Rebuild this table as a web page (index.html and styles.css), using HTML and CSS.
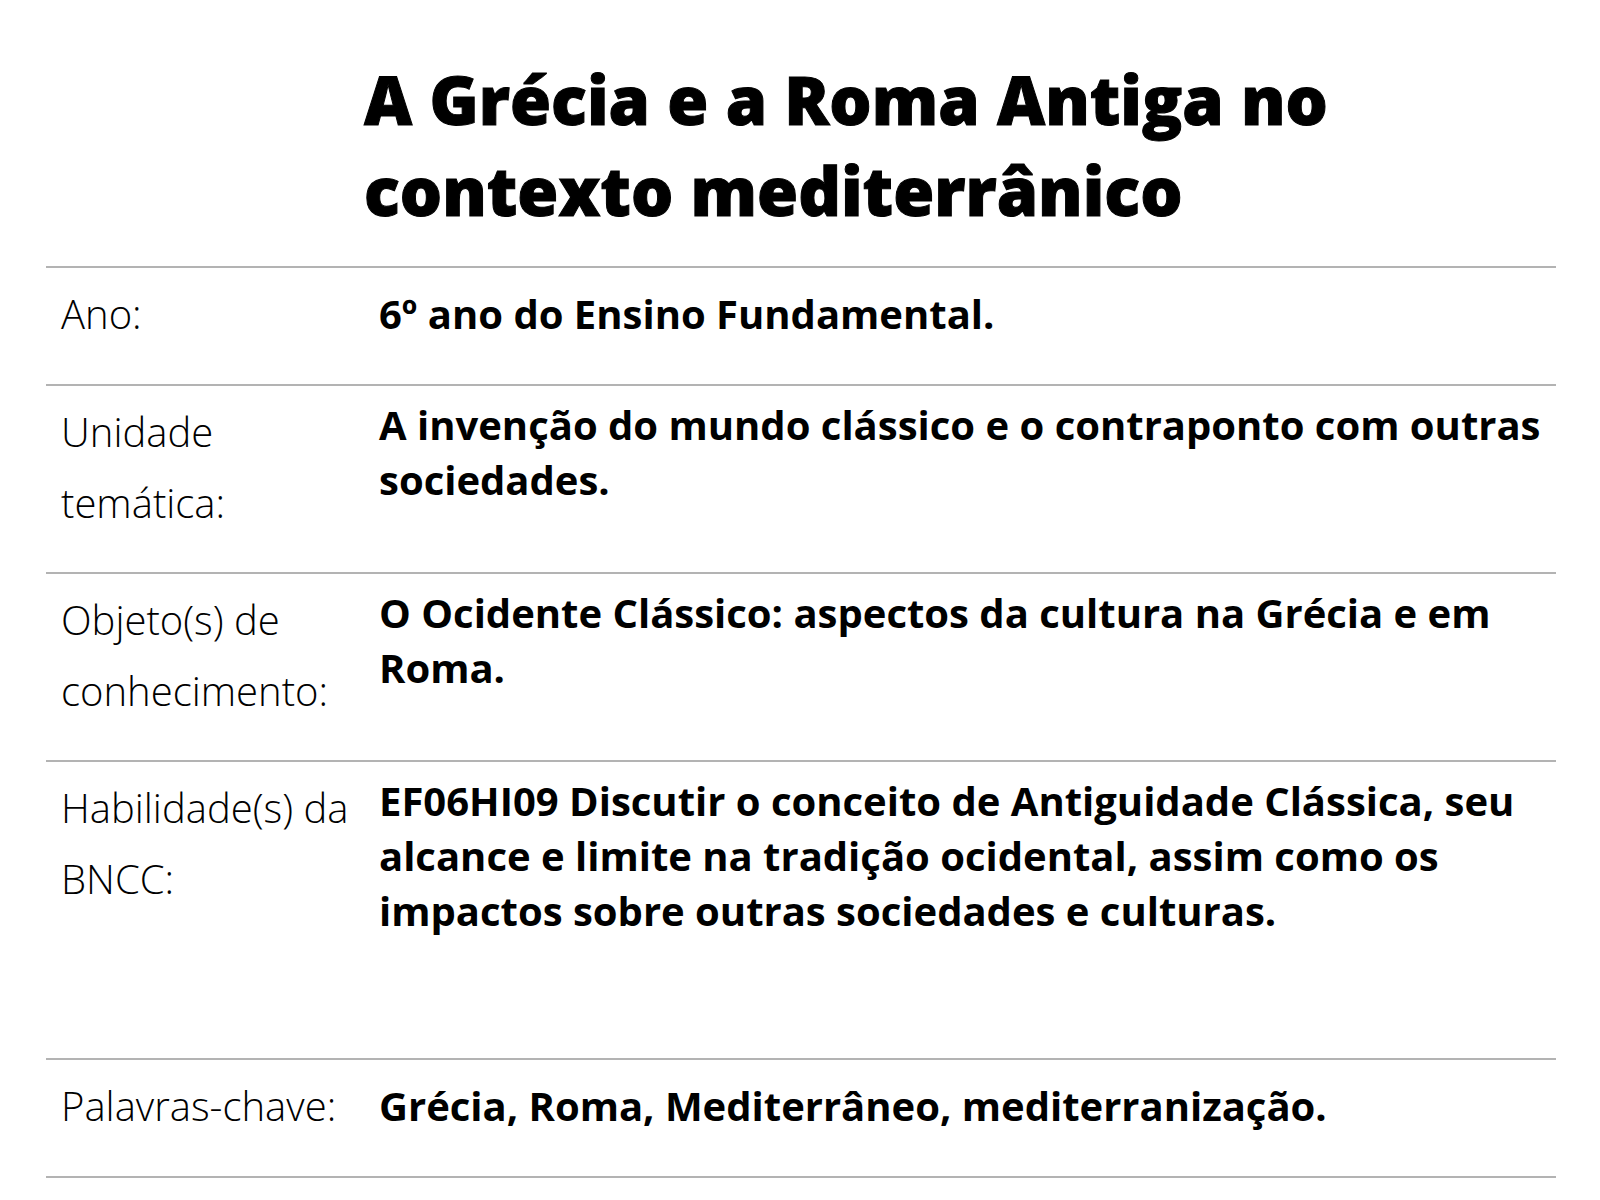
FILE: index.html
```html
<!DOCTYPE html>
<html lang="pt-BR">
<head>
<meta charset="utf-8">
<title>A Grécia e a Roma Antiga no contexto mediterrânico</title>
<link rel="stylesheet" href="styles.css">
</head>
<body>
<main class="page">
  <h1 class="title">A Grécia e a Roma Antiga no contexto mediterrânico</h1>
  <section class="sheet">
    <div class="row row-short">
      <div class="label">Ano:</div>
      <div class="value value-single">6º ano do Ensino Fundamental.</div>
    </div>
    <div class="row row-mid">
      <div class="label">Unidade<br>temática:</div>
      <div class="value">A invenção do mundo clássico e o contraponto com outras sociedades.</div>
    </div>
    <div class="row row-mid">
      <div class="label">Objeto(s) de<br>conhecimento:</div>
      <div class="value">O Ocidente Clássico: aspectos da cultura na Grécia e em Roma.</div>
    </div>
    <div class="row row-tall">
      <div class="label">Habilidade(s) da<br>BNCC:</div>
      <div class="value">EF06HI09 Discutir o conceito de Antiguidade Clássica, seu alcance e limite na tradição ocidental, assim como os impactos sobre outras sociedades e culturas.</div>
    </div>
    <div class="row row-short">
      <div class="label">Palavras-chave:</div>
      <div class="value value-single">Grécia, Roma, Mediterrâneo, mediterranização.</div>
    </div>
  </section>
</main>
</body>
</html>
```

FILE: styles.css
```css
* { box-sizing: border-box; }

html, body {
  margin: 0;
  padding: 0;
  background: #ffffff;
  color: #000000;
  font-family: "Open Sans", "Noto Sans", sans-serif;
}

.page {
  width: 1600px;
  height: 1200px;
  padding-top: 54px;
  overflow: hidden;
}

.title {
  margin: 0 0 30px 364px;
  width: 1100px;
  font-size: 66.5px;
  line-height: 91px;
  font-weight: 800;
  letter-spacing: 0;
  -webkit-text-stroke: 1px #000000;
}

.sheet {
  margin-left: 46px;
  width: 1510px;
  border-bottom: 2px solid #b3b3b3;
}

.row {
  display: grid;
  grid-template-columns: 333px 1fr;
  border-top: 2px solid #b3b3b3;
}

.row-short { height: 118px; }
.row-mid { height: 188px; }
.row-tall { height: 298px; }

.label {
  padding: 10px 0 0 15px;
  font-size: 40px;
  line-height: 71px;
  font-weight: 300;
}

.value {
  padding: 11px 0 0 0;
  font-size: 40px;
  line-height: 55px;
  font-weight: 700;
}

.value-single {
  padding-top: 10px;
  line-height: 71px;
}
```
